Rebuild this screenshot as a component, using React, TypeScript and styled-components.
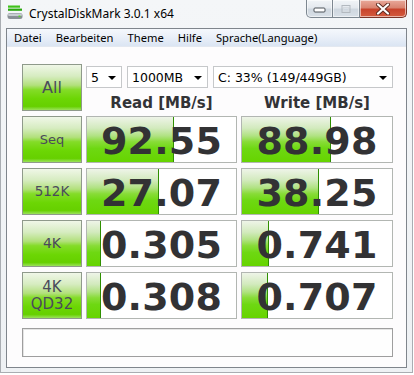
import React from "react";
import styled, { createGlobalStyle } from "styled-components";

const GlobalStyle = createGlobalStyle`
  html, body { margin: 0; padding: 0; background: #ffffff; }
  * { box-sizing: border-box; }
`;

const Window = styled.div`
  width: 413px;
  height: 373px;
  background: linear-gradient(180deg, #f4f6f8 0%, #eef1f4 100%);
  border-left: 1px solid #a9adb2;
  border-right: 1px solid #a9adb2;
  border-bottom: 1px solid #a9adb2;
  display: flex;
  flex-direction: column;
  font-family: "DejaVu Sans", Verdana, sans-serif;
`;

const TitleBar = styled.div`
  height: 28px;
  display: flex;
  align-items: flex-start;
  justify-content: space-between;
  flex: none;
`;

const TitleGroup = styled.div`
  display: flex;
  align-items: flex-start;
  gap: 6px;
  padding: 5px 0 0 6px;
`;

const TitleText = styled.span`
  font-family: "Noto Sans", "Open Sans", sans-serif;
  font-size: 12px;
  line-height: 16px;
  color: #000;
  margin-top: 1px;
`;

const CaptionGroup = styled.div`
  display: flex;
  margin-right: 5px;
`;

const CaptionButton = styled.div<{ $w: number; $kind: "min" | "max" | "close" }>`
  width: ${(p) => p.$w}px;
  height: 18px;
  display: flex;
  align-items: center;
  justify-content: center;
  border: 1px solid ${(p) => (p.$kind === "close" ? "#7a3428" : "#7d8790")};
  border-top: none;
  border-left-width: ${(p) => (p.$kind === "min" ? 1 : 0)}px;
  border-bottom-left-radius: ${(p) => (p.$kind === "min" ? 5 : 0)}px;
  border-bottom-right-radius: ${(p) => (p.$kind === "close" ? 5 : 0)}px;
  background: ${(p) =>
    p.$kind === "close"
      ? "linear-gradient(180deg, #e9a99b 0%, #d98471 45%, #c8432c 55%, #d45c3e 100%)"
      : "linear-gradient(180deg, #f1f4f7 0%, #e4e9ee 45%, #cfd7df 55%, #d9e0e7 100%)"};
  box-shadow: inset 0 0 0 1px rgba(255, 255, 255, 0.55);
`;

const Client = styled.div`
  margin: 0 5px 4px 5px;
  flex: 1;
  border: 1px solid #7f858c;
  background: #fdfcfd;
  display: flex;
  flex-direction: column;
`;

const MenuBar = styled.div`
  height: 18px;
  display: flex;
  align-items: center;
  background: linear-gradient(180deg, #f5f8fc 0%, #e9eff8 50%, #dbe5f3 100%);
  border-bottom: 1px solid #e3e8f0;
`;

const MenuItem = styled.span`
  font-family: "Noto Sans", "Open Sans", sans-serif;
  font-size: 11.2px;
  color: #000;
  padding: 0 7px;
  line-height: 18px;
`;

const Content = styled.div`
  padding: 17px 0 0 15px;
  display: flex;
  flex-direction: column;
`;

const Grid = styled.div`
  display: grid;
  grid-template-columns: 60px 151px 152px;
  grid-auto-rows: 47px;
  column-gap: 4px;
  row-gap: 5px;
`;

const TestButton = styled.div<{ $size: number }>`
  border: 1px solid #8f9a8b;
  background: linear-gradient(
    180deg,
    #f0f7e8 0%,
    #d6ecc0 25%,
    #b2e07c 45%,
    #84dc28 55%,
    #6cd604 75%,
    #66d000 92%,
    #9ae25a 100%
  );
  display: flex;
  flex-direction: column;
  align-items: center;
  justify-content: center;
  font-family: "DejaVu Sans", Verdana, sans-serif;
  font-size: ${(p) => p.$size}px;
  line-height: 17px;
  color: #4a4a5c;
`;

const TopPanel = styled.div`
  grid-column: 2 / span 2;
  display: flex;
  flex-direction: column;
`;

const ComboRow = styled.div`
  display: flex;
  gap: 5px;
  margin-top: 2px;
`;

const Combo = styled.div<{ $w: number }>`
  width: ${(p) => p.$w}px;
  height: 22px;
  border: 1px solid #c6c8ca;
  background: #fff;
  display: flex;
  align-items: center;
  justify-content: space-between;
  padding: 0 5px 0 4px;
  font-family: "DejaVu Sans", Verdana, sans-serif;
  font-size: 12.5px;
  color: #000;
`;

const Arrow = styled.span`
  width: 0;
  height: 0;
  border-left: 4px solid transparent;
  border-right: 4px solid transparent;
  border-top: 4px solid #000;
  margin-top: 1px;
`;

const HeaderRow = styled.div`
  display: grid;
  grid-template-columns: 151px 152px;
  column-gap: 4px;
  margin-top: 7px;
`;

const Header = styled.div`
  text-align: center;
  font-family: "DejaVu Sans", Verdana, sans-serif;
  font-weight: bold;
  font-size: 15px;
  line-height: 16px;
  color: #333336;
`;

const ValueCell = styled.div`
  position: relative;
  border: 1px solid #b2b6b2;
  background: #fff;
  overflow: hidden;
`;

const Fill = styled.div`
  position: absolute;
  left: 0;
  top: 0;
  bottom: 0;
  border-right: 1px solid #2f8f00;
  background: linear-gradient(
    180deg,
    #eef4e8 0%,
    #d2eabd 25%,
    #b0e282 42%,
    #88dc38 55%,
    #6ed812 70%,
    #66d400 100%
  );
`;

const Value = styled.div`
  position: relative;
  text-align: center;
  padding-top: 4px;
  line-height: 41px;
  font-family: "DejaVu Sans", Verdana, sans-serif;
  font-weight: bold;
  font-size: 38px;
  color: #323234;
  letter-spacing: 0.2px;
`;

const StatusBar = styled.div`
  margin-top: 9px;
  width: 371px;
  height: 29px;
  border: 1px solid #9e9e9e;
  background: #fefefe;
  box-shadow: inset 1px 1px 0 #e4e4e4;
`;

const AppIcon = () => (
  <svg width="16" height="16" viewBox="0 0 16 16">
    <rect x="1" y="0.5" width="12" height="2.2" fill="#3fc21a" />
    <rect x="1" y="3.6" width="14" height="2.2" fill="#2aa80e" />
    <rect x="0.5" y="8" width="15" height="6" rx="2.5" fill="#8a9096" />
    <rect x="1" y="8.5" width="14" height="2.5" rx="1.2" fill="#c9ced3" />
    <rect x="11.5" y="10.5" width="2" height="1.6" fill="#58d030" />
  </svg>
);

const MinGlyph = () => (
  <svg width="14" height="8" viewBox="0 0 14 8">
    <rect x="1" y="3" width="11" height="4" rx="1" fill="#fff" stroke="#4c5258" />
  </svg>
);

const MaxGlyph = () => (
  <svg width="12" height="10" viewBox="0 0 12 10">
    <rect x="2" y="1.5" width="8" height="7" fill="none" stroke="#b3b9bf" />
    <rect x="3.5" y="3.5" width="5" height="3.5" fill="none" stroke="#d6dbe0" />
  </svg>
);

const CloseGlyph = () => (
  <svg width="16" height="12" viewBox="0 0 16 12">
    <path d="M3 1.5 L13 10.5 M13 1.5 L3 10.5" stroke="#5c2a20" strokeWidth="4" strokeLinecap="round" />
    <path d="M3 1.5 L13 10.5 M13 1.5 L3 10.5" stroke="#ffffff" strokeWidth="2.2" strokeLinecap="round" />
  </svg>
);

type Row = {
  label: string[];
  size: number;
  read: string;
  readFill: number;
  write: string;
  writeFill: number;
};

const rows: Row[] = [
  { label: ["Seq"], size: 13, read: "92.55", readFill: 87, write: "88.98", writeFill: 89 },
  { label: ["512K"], size: 13.5, read: "27.07", readFill: 72, write: "38.25", writeFill: 77 },
  { label: ["4K"], size: 14, read: "0.305", readFill: 14, write: "0.741", writeFill: 27 },
  { label: ["4K", "QD32"], size: 15, read: "0.308", readFill: 14, write: "0.707", writeFill: 26 },
];

const menus = ["Datei", "Bearbeiten", "Theme", "Hilfe", "Sprache(Language)"];

export default function App() {
  return (
    <>
      <GlobalStyle />
      <Window>
        <TitleBar>
          <TitleGroup>
            <AppIcon />
            <TitleText>CrystalDiskMark 3.0.1 x64</TitleText>
          </TitleGroup>
          <CaptionGroup>
            <CaptionButton $w={27} $kind="min">
              <MinGlyph />
            </CaptionButton>
            <CaptionButton $w={27} $kind="max">
              <MaxGlyph />
            </CaptionButton>
            <CaptionButton $w={47} $kind="close">
              <CloseGlyph />
            </CaptionButton>
          </CaptionGroup>
        </TitleBar>
        <Client>
          <MenuBar>
            {menus.map((m) => (
              <MenuItem key={m}>{m}</MenuItem>
            ))}
          </MenuBar>
          <Content>
            <Grid>
              <TestButton $size={16}>All</TestButton>
              <TopPanel>
                <ComboRow>
                  <Combo $w={36}>
                    <span>5</span>
                    <Arrow />
                  </Combo>
                  <Combo $w={81}>
                    <span>1000MB</span>
                    <Arrow />
                  </Combo>
                  <Combo $w={180}>
                    <span>C: 33% (149/449GB)</span>
                    <Arrow />
                  </Combo>
                </ComboRow>
                <HeaderRow>
                  <Header>Read [MB/s]</Header>
                  <Header>Write [MB/s]</Header>
                </HeaderRow>
              </TopPanel>
              {rows.map((r) => (
                <React.Fragment key={r.label.join(" ")}>
                  <TestButton $size={r.size}>
                    {r.label.map((l) => (
                      <span key={l}>{l}</span>
                    ))}
                  </TestButton>
                  <ValueCell>
                    <Fill style={{ width: `${r.readFill}px` }} />
                    <Value>{r.read}</Value>
                  </ValueCell>
                  <ValueCell>
                    <Fill style={{ width: `${r.writeFill}px` }} />
                    <Value>{r.write}</Value>
                  </ValueCell>
                </React.Fragment>
              ))}
            </Grid>
            <StatusBar />
          </Content>
        </Client>
      </Window>
    </>
  );
}
